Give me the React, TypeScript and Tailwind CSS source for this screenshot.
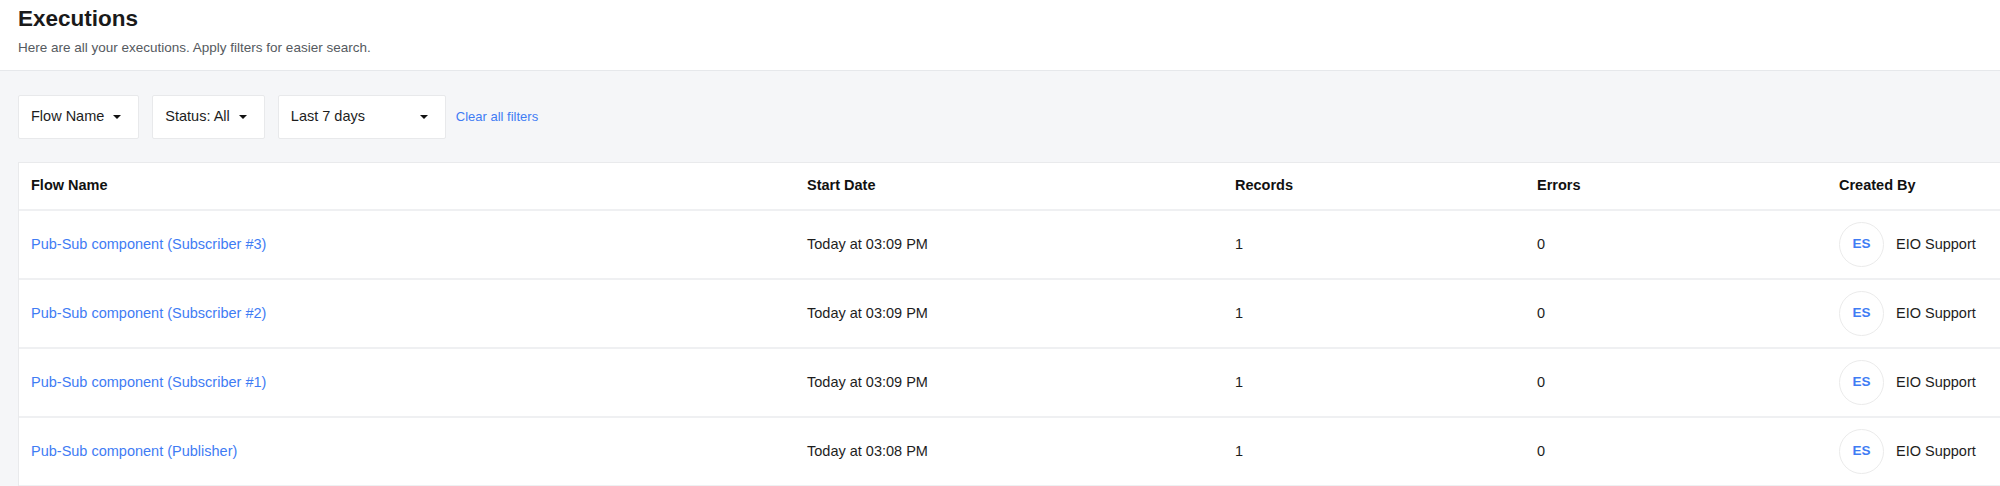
const rows = [
  { name: "Pub-Sub component (Subscriber #3)", date: "Today at 03:09 PM" },
  { name: "Pub-Sub component (Subscriber #2)", date: "Today at 03:09 PM" },
  { name: "Pub-Sub component (Subscriber #1)", date: "Today at 03:09 PM" },
  { name: "Pub-Sub component (Publisher)", date: "Today at 03:08 PM" },
];

// Small solid caret used by the filter dropdowns
const Caret = () => (
  <svg width="8" height="4" viewBox="0 0 8 4" className="shrink-0">
    <path d="M0 0h8L4 4z" fill="#111" />
  </svg>
);

const Filter = ({ label, wide }: { label: string; wide?: boolean }) => (
  <button
    className={`h-[44px] flex items-center gap-[9px] pl-[12px] pr-[17px] bg-white border border-[#e8e9eb] rounded-[2px] text-[14.5px] text-[#1d1d1d] whitespace-nowrap ${
      wide ? "w-[168px] justify-between" : ""
    }`}
  >
    <span>{label}</span>
    <Caret />
  </button>
);

export default function App() {
  return (
    <div
      className="min-h-[486px] bg-[#f5f6f8] text-[#1d1d1d]"
      style={{ fontFamily: "'Liberation Sans', Arial, sans-serif" }}
    >
      {/* Page header */}
      <div className="bg-white border-b border-[#e6e8eb] h-[71px] pl-[18px] pt-[6px]">
        <h1 className="text-[22.5px] leading-[26px] font-bold text-[#1a1a1a]">Executions</h1>
        <p className="mt-[6px] text-[13.5px] leading-[20px] text-[#555a60]">
          Here are all your executions. Apply filters for easier search.
        </p>
      </div>

      {/* Filters */}
      <div className="flex items-center gap-[13px] pl-[18px] pt-6">
        <Filter label="Flow Name" />
        <Filter label="Status: All" />
        <Filter label="Last 7 days" wide />
        <button className="text-[13px] text-[#3f7cf4] -ml-[3px] whitespace-nowrap">Clear all filters</button>
      </div>

      {/* Table */}
      <div className="ml-[18px] mt-[23px] bg-white border-l border-t border-[#e9eaec]">
        <div className="grid grid-cols-[776px_428px_302px_302px_1fr] h-[48px] items-center border-b-2 border-[#eff0f2] text-[14.5px] font-bold text-[#111]">
          <div className="pl-[12px]">Flow Name</div>
          <div className="pl-[12px]">Start Date</div>
          <div className="pl-[12px]">Records</div>
          <div className="pl-[12px]">Errors</div>
          <div className="pl-[12px]">Created By</div>
        </div>
        {rows.map((r, i) => (
          <div
            key={i}
            className="grid grid-cols-[776px_428px_302px_302px_1fr] h-[69px] items-center border-b-2 border-[#eff0f2] text-[14.5px]"
          >
            <div className="pl-[12px] text-[#3f7cf4]">{r.name}</div>
            <div className="pl-[12px] text-[#1d1d1d]">{r.date}</div>
            <div className="pl-[12px]">1</div>
            <div className="pl-[12px]">0</div>
            <div className="pl-[12px] flex items-center gap-[12px]">
              <div className="w-[45px] h-[45px] rounded-full border border-[#ebebeb] flex items-center justify-center text-[13.5px] font-bold text-[#3f7cf4]">
                ES
              </div>
              <span className="whitespace-nowrap">EIO Support</span>
            </div>
          </div>
        ))}
      </div>
    </div>
  );
}
